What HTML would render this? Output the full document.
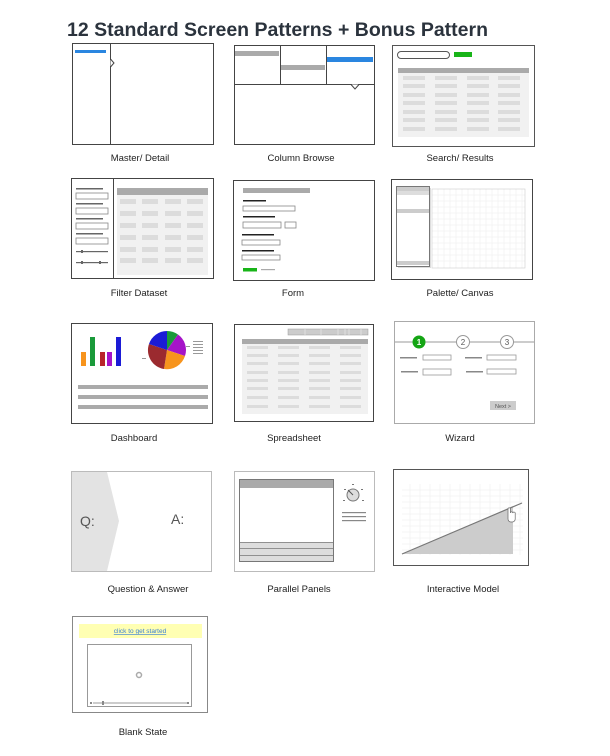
<!DOCTYPE html>
<html><head><meta charset="utf-8"><style>
html,body{margin:0;padding:0;background:#fff;}
svg{display:block;font-family:"Liberation Sans",Arial,sans-serif;}
</style></head><body>
<svg width="610" height="756" viewBox="0 0 610 756" xmlns="http://www.w3.org/2000/svg">
<text x="67" y="36" font-size="19.5" font-weight="bold" fill="#2b333d">12 Standard Screen Patterns + Bonus Pattern</text>

<g font-size="9.5" fill="#222" text-anchor="middle">
<text x="140" y="161">Master/ Detail</text>
<text x="301" y="161">Column Browse</text>
<text x="460" y="161">Search/ Results</text>
<text x="139" y="296">Filter Dataset</text>
<text x="293" y="296">Form</text>
<text x="460" y="296">Palette/ Canvas</text>
<text x="134" y="441">Dashboard</text>
<text x="294" y="441">Spreadsheet</text>
<text x="460" y="441">Wizard</text>
<text x="148" y="592">Question &amp; Answer</text>
<text x="299" y="592">Parallel Panels</text>
<text x="463" y="592">Interactive Model</text>
<text x="143" y="735">Blank State</text>
</g>

<!-- Master/Detail -->
<rect x="72.5" y="43.5" width="141" height="101" fill="#fff" stroke="#444"/>
<rect x="75" y="50" width="31" height="3" fill="#2a86e0"/>
<line x1="110.5" y1="43" x2="110.5" y2="145" stroke="#444"/>
<path d="M110.5 59 L114 63 L110.5 67" fill="#fff" stroke="#444"/>

<!-- Column Browse -->
<rect x="234.5" y="45.5" width="140" height="99" fill="#fff" stroke="#444"/>
<line x1="280.5" y1="45" x2="280.5" y2="84" stroke="#444"/>
<line x1="326.5" y1="45" x2="326.5" y2="84" stroke="#444"/>
<line x1="234" y1="84.5" x2="375" y2="84.5" stroke="#444"/>
<rect x="235" y="51" width="44" height="5" fill="#aaa"/>
<rect x="281" y="65" width="44" height="5" fill="#aaa"/>
<rect x="327" y="57" width="46" height="5" fill="#2a86e0"/>
<path d="M351 84.5 L355 89 L359 84.5" fill="#fff" stroke="#444"/>

<!-- Search/Results -->
<rect x="392.5" y="45.5" width="142" height="101" fill="#fff" stroke="#555"/>
<rect x="397.5" y="51.5" width="52" height="7" rx="3.5" fill="#fff" stroke="#555"/>
<rect x="454" y="52" width="18" height="5" fill="#18b418"/>
<rect x="398" y="68" width="131" height="5" fill="#aaa"/>
<rect x="398" y="73" width="131" height="64" fill="#f1f1f1"/>
<g fill="#dcdcdc">
<rect x="403" y="76" width="22" height="4"/><rect x="435" y="76" width="22" height="4"/><rect x="467" y="76" width="22" height="4"/><rect x="498" y="76" width="22" height="4"/>
<rect x="403" y="84" width="22" height="4"/><rect x="435" y="84" width="22" height="4"/><rect x="467" y="84" width="22" height="4"/><rect x="498" y="84" width="22" height="4"/>
<rect x="403" y="93" width="22" height="4"/><rect x="435" y="93" width="22" height="4"/><rect x="467" y="93" width="22" height="4"/><rect x="498" y="93" width="22" height="4"/>
<rect x="403" y="101" width="22" height="4"/><rect x="435" y="101" width="22" height="4"/><rect x="467" y="101" width="22" height="4"/><rect x="498" y="101" width="22" height="4"/>
<rect x="403" y="110" width="22" height="4"/><rect x="435" y="110" width="22" height="4"/><rect x="467" y="110" width="22" height="4"/><rect x="498" y="110" width="22" height="4"/>
<rect x="403" y="118" width="22" height="4"/><rect x="435" y="118" width="22" height="4"/><rect x="467" y="118" width="22" height="4"/><rect x="498" y="118" width="22" height="4"/>
<rect x="403" y="127" width="22" height="4"/><rect x="435" y="127" width="22" height="4"/><rect x="467" y="127" width="22" height="4"/><rect x="498" y="127" width="22" height="4"/>
</g>

<!-- Filter Dataset -->
<rect x="71.5" y="178.5" width="142" height="100" fill="#fff" stroke="#444"/>
<line x1="113.5" y1="178" x2="113.5" y2="279" stroke="#444"/>
<g fill="#666"><rect x="76" y="188" width="27" height="1.5"/><rect x="76" y="203" width="27" height="1.5"/><rect x="76" y="218" width="27" height="1.5"/><rect x="76" y="233" width="27" height="1.5"/><rect x="76" y="251" width="32" height="1.2"/><rect x="76" y="262" width="32" height="1.2"/></g>
<g fill="#fff" stroke="#888" stroke-width="0.8"><rect x="76" y="193" width="32" height="6"/><rect x="76" y="208" width="32" height="6"/><rect x="76" y="223" width="32" height="6"/><rect x="76" y="238" width="32" height="6"/></g>
<rect x="81" y="250" width="2" height="3" fill="#666"/><rect x="81" y="261" width="2" height="3" fill="#666"/><rect x="99" y="261" width="2" height="3" fill="#666"/>
<rect x="117" y="188" width="91" height="7" fill="#aaa"/>
<rect x="117" y="195" width="91" height="80" fill="#f1f1f1"/>
<g fill="#dcdcdc">
<rect x="120" y="199" width="16" height="5"/><rect x="142" y="199" width="16" height="5"/><rect x="165" y="199" width="16" height="5"/><rect x="187" y="199" width="16" height="5"/>
<rect x="120" y="211" width="16" height="5"/><rect x="142" y="211" width="16" height="5"/><rect x="165" y="211" width="16" height="5"/><rect x="187" y="211" width="16" height="5"/>
<rect x="120" y="223" width="16" height="5"/><rect x="142" y="223" width="16" height="5"/><rect x="165" y="223" width="16" height="5"/><rect x="187" y="223" width="16" height="5"/>
<rect x="120" y="235" width="16" height="5"/><rect x="142" y="235" width="16" height="5"/><rect x="165" y="235" width="16" height="5"/><rect x="187" y="235" width="16" height="5"/>
<rect x="120" y="247" width="16" height="5"/><rect x="142" y="247" width="16" height="5"/><rect x="165" y="247" width="16" height="5"/><rect x="187" y="247" width="16" height="5"/>
<rect x="120" y="258" width="16" height="5"/><rect x="142" y="258" width="16" height="5"/><rect x="165" y="258" width="16" height="5"/><rect x="187" y="258" width="16" height="5"/>
</g>

<!-- Form -->
<rect x="233.5" y="180.5" width="141" height="100" fill="#fff" stroke="#444"/>
<rect x="243" y="188" width="67" height="5" fill="#aaa"/>
<g fill="#222"><rect x="243" y="200" width="23" height="1.5"/><rect x="243" y="216" width="32" height="1.5"/><rect x="242" y="234" width="32" height="1.5"/><rect x="242" y="250" width="32" height="1.5"/></g>
<g fill="#fff" stroke="#888" stroke-width="0.8"><rect x="243" y="206" width="52" height="5"/><rect x="243" y="222" width="38" height="6"/><rect x="285" y="222" width="11" height="6"/><rect x="242" y="240" width="38" height="5"/><rect x="242" y="255" width="38" height="5"/></g>
<rect x="243" y="268" width="14" height="3.5" fill="#18b418"/><rect x="261" y="269" width="14" height="1.2" fill="#aaa"/>

<!-- Palette/Canvas -->
<rect x="391.5" y="179.5" width="141" height="100" fill="#fff" stroke="#444"/>
<g stroke="#ececec" stroke-width="0.5">
<path d="M432 195H525M432 201H525M432 207H525M432 213H525M432 219H525M432 225H525M432 231H525M432 237H525M432 243H525M432 249H525M432 255H525M432 261H525"/>
<path d="M438 189V268M444 189V268M450 189V268M456 189V268M462 189V268M468 189V268M474 189V268M480 189V268M486 189V268M492 189V268M498 189V268M504 189V268M510 189V268M516 189V268M522 189V268"/>
</g>
<rect x="432" y="189" width="93" height="79" fill="none" stroke="#ccc" stroke-width="0.6"/>
<rect x="398" y="188" width="33" height="80" fill="#bbb" opacity="0.5"/>
<rect x="396.5" y="186.5" width="33" height="80" fill="#fff" stroke="#777"/>
<rect x="397" y="187" width="32" height="4" fill="#ccc"/><rect x="397" y="191" width="32" height="4" fill="#ddd"/>
<rect x="397" y="209" width="32" height="4" fill="#ccc"/>
<rect x="397" y="261" width="32" height="4" fill="#ccc"/>

<!-- Dashboard -->
<rect x="71.5" y="323.5" width="141" height="100" fill="#fff" stroke="#444"/>
<rect x="81" y="352" width="5" height="14" fill="#f7941d"/>
<rect x="90" y="337" width="5" height="29" fill="#1a9a3a"/>
<rect x="100" y="352" width="5" height="14" fill="#b8252a"/>
<rect x="107" y="352" width="5" height="14" fill="#a514c8"/>
<rect x="116" y="337" width="5" height="29" fill="#1b1bd6"/>
<g transform="translate(167,350)">
<path d="M0 0 L0 -19 A19 19 0 0 1 11 -15.5 Z" fill="#1a9a3a"/>
<path d="M0 0 L11 -15.5 A19 19 0 0 1 18 6 Z" fill="#a514c8"/>
<path d="M0 0 L18 6 A19 19 0 0 1 -3 19 Z" fill="#f7941d"/>
<path d="M0 0 L-3 19 A19 19 0 0 1 -18 -6 Z" fill="#9b2a2f"/>
<path d="M0 0 L-18 -6 A19 19 0 0 1 0 -19 Z" fill="#1b1bd6"/>
</g>
<g fill="#999"><rect x="193" y="341" width="10" height="1"/><rect x="193" y="344" width="10" height="1"/><rect x="193" y="347" width="10" height="1"/><rect x="193" y="350" width="10" height="1"/><rect x="193" y="353" width="10" height="1"/><rect x="186" y="346" width="4" height="1"/><rect x="142" y="358" width="4" height="1"/></g>
<g fill="#aaa"><rect x="78" y="385" width="130" height="4"/><rect x="78" y="395" width="130" height="4"/><rect x="78" y="405" width="130" height="4"/></g>

<!-- Spreadsheet -->
<rect x="234.5" y="324.5" width="139" height="97" fill="#fff" stroke="#444"/>
<rect x="288" y="329" width="80" height="6" fill="#ccc" stroke="#999" stroke-width="0.5"/>
<path d="M305 329V335M321 329V335M338 329V335M345 329V335M349 329V335M361 329V335" stroke="#eee" stroke-width="0.6"/>
<rect x="242" y="339" width="126" height="5" fill="#aaa"/>
<rect x="242" y="344" width="126" height="70" fill="#f1f1f1"/>
<g fill="#dcdcdc">
<rect x="247" y="346" width="21" height="3"/><rect x="278" y="346" width="21" height="3"/><rect x="309" y="346" width="21" height="3"/><rect x="340" y="346" width="21" height="3"/>
<rect x="247" y="354" width="21" height="3"/><rect x="278" y="354" width="21" height="3"/><rect x="309" y="354" width="21" height="3"/><rect x="340" y="354" width="21" height="3"/>
<rect x="247" y="362" width="21" height="3"/><rect x="278" y="362" width="21" height="3"/><rect x="309" y="362" width="21" height="3"/><rect x="340" y="362" width="21" height="3"/>
<rect x="247" y="371" width="21" height="3"/><rect x="278" y="371" width="21" height="3"/><rect x="309" y="371" width="21" height="3"/><rect x="340" y="371" width="21" height="3"/>
<rect x="247" y="379" width="21" height="3"/><rect x="278" y="379" width="21" height="3"/><rect x="309" y="379" width="21" height="3"/><rect x="340" y="379" width="21" height="3"/>
<rect x="247" y="387" width="21" height="3"/><rect x="278" y="387" width="21" height="3"/><rect x="309" y="387" width="21" height="3"/><rect x="340" y="387" width="21" height="3"/>
<rect x="247" y="396" width="21" height="3"/><rect x="278" y="396" width="21" height="3"/><rect x="309" y="396" width="21" height="3"/><rect x="340" y="396" width="21" height="3"/>
<rect x="247" y="405" width="21" height="3"/><rect x="278" y="405" width="21" height="3"/><rect x="309" y="405" width="21" height="3"/><rect x="340" y="405" width="21" height="3"/>
</g>

<!-- Wizard -->
<rect x="394.5" y="321.5" width="140" height="102" fill="#fff" stroke="#aaa"/>
<line x1="395" y1="342" x2="534" y2="342" stroke="#999"/>
<circle cx="419" cy="342" r="6.5" fill="#14a514"/>
<text x="419" y="345" font-size="8" fill="#fff" text-anchor="middle" font-weight="bold">1</text>
<circle cx="463" cy="342" r="6.5" fill="#fff" stroke="#999"/>
<text x="463" y="345" font-size="8" fill="#555" text-anchor="middle">2</text>
<circle cx="507" cy="342" r="6.5" fill="#fff" stroke="#999"/>
<text x="507" y="345" font-size="8" fill="#555" text-anchor="middle">3</text>
<g fill="#888"><rect x="400" y="357" width="17" height="1.5"/><rect x="465" y="357" width="17" height="1.5"/><rect x="401" y="371" width="17" height="1.5"/><rect x="466" y="371" width="17" height="1.5"/></g>
<g fill="#fff" stroke="#999" stroke-width="0.8"><rect x="423" y="355" width="28" height="5"/><rect x="487" y="355" width="29" height="5"/><rect x="423" y="369" width="28" height="6"/><rect x="487" y="369" width="29" height="5"/></g>
<rect x="490" y="401" width="26" height="9" fill="#ccc"/>
<text x="503" y="408" font-size="5.5" fill="#555" text-anchor="middle">Next &gt;</text>

<!-- Q&A -->
<rect x="71.5" y="471.5" width="140" height="100" fill="#fff" stroke="#bbb"/>
<path d="M72 472 H107 L119 521 L107 571 H72 Z" fill="#e3e3e3"/>
<text x="80" y="526" font-size="14" fill="#555">Q:</text>
<text x="171" y="524" font-size="14" fill="#555">A:</text>

<!-- Parallel Panels -->
<rect x="234.5" y="471.5" width="140" height="100" fill="#fff" stroke="#bbb"/>
<rect x="239.5" y="479.5" width="94" height="82" fill="#fff" stroke="#777"/>
<rect x="240" y="480" width="93" height="8" fill="#aaa"/>
<rect x="240" y="542" width="93" height="19" fill="#ddd"/>
<path d="M240 542.5H333M240 548.5H333M240 555.5H333" stroke="#777" stroke-width="0.7"/>
<circle cx="353" cy="495" r="6" fill="#ddd" stroke="#777"/>
<line x1="353" y1="495" x2="348" y2="490" stroke="#555"/>
<g fill="#777"><rect x="352" y="484" width="2" height="1"/><rect x="344" y="489" width="2" height="1"/><rect x="361" y="489" width="2" height="1"/><rect x="343" y="500" width="2" height="1"/><rect x="362" y="500" width="2" height="1"/></g>
<g fill="#888"><rect x="342" y="512" width="24" height="1.2"/><rect x="342" y="516" width="24" height="1.2"/><rect x="342" y="520" width="24" height="1.2"/></g>

<!-- Interactive Model -->
<rect x="393.5" y="469.5" width="135" height="96" fill="#fff" stroke="#555"/>
<g stroke="#ececec" stroke-width="0.5">
<path d="M402 490H523M402 496H523M402 502H523M402 508H523M402 514H523M402 520H523M402 526H523M402 532H523M402 538H523M402 544H523M402 550H523"/>
<path d="M410 484V555M420 484V555M430 484V555M440 484V555M450 484V555M460 484V555M470 484V555M480 484V555M490 484V555M500 484V555M510 484V555M520 484V555"/>
</g>
<path d="M402 554 L513 506 L513 554 Z" fill="#ccc"/>
<line x1="402" y1="554" x2="522" y2="503" stroke="#777" stroke-width="1.2"/>
<path d="M508 515 V509 a1.2 1.2 0 0 1 2.4 0 V513 a1.2 1.2 0 0 1 2.4 0 a1.2 1.2 0 0 1 2.4 0.5 V519 a3 3 0 0 1 -3 3 H511 a3 3 0 0 1 -3 -3 Z" fill="#fff" stroke="#666" stroke-width="0.7"/>

<!-- Blank State -->
<rect x="72.5" y="616.5" width="135" height="96" fill="#fff" stroke="#888"/>
<rect x="79" y="624" width="123" height="14" fill="#ffffb3"/>
<text x="140" y="633" font-size="6.5" fill="#3a7fd5" text-anchor="middle" text-decoration="underline">click to get started</text>
<rect x="87.5" y="644.5" width="104" height="62" fill="#fff" stroke="#999"/>
<circle cx="139" cy="675" r="2.5" fill="none" stroke="#aaa" stroke-width="1.5"/>
<line x1="93" y1="703" x2="187" y2="703" stroke="#999"/>
<rect x="102" y="701" width="2" height="4" fill="#888"/>
<rect x="90" y="702" width="2" height="2" fill="#888"/><rect x="187" y="702" width="2" height="2" fill="#888"/>
</svg>
</body></html>
